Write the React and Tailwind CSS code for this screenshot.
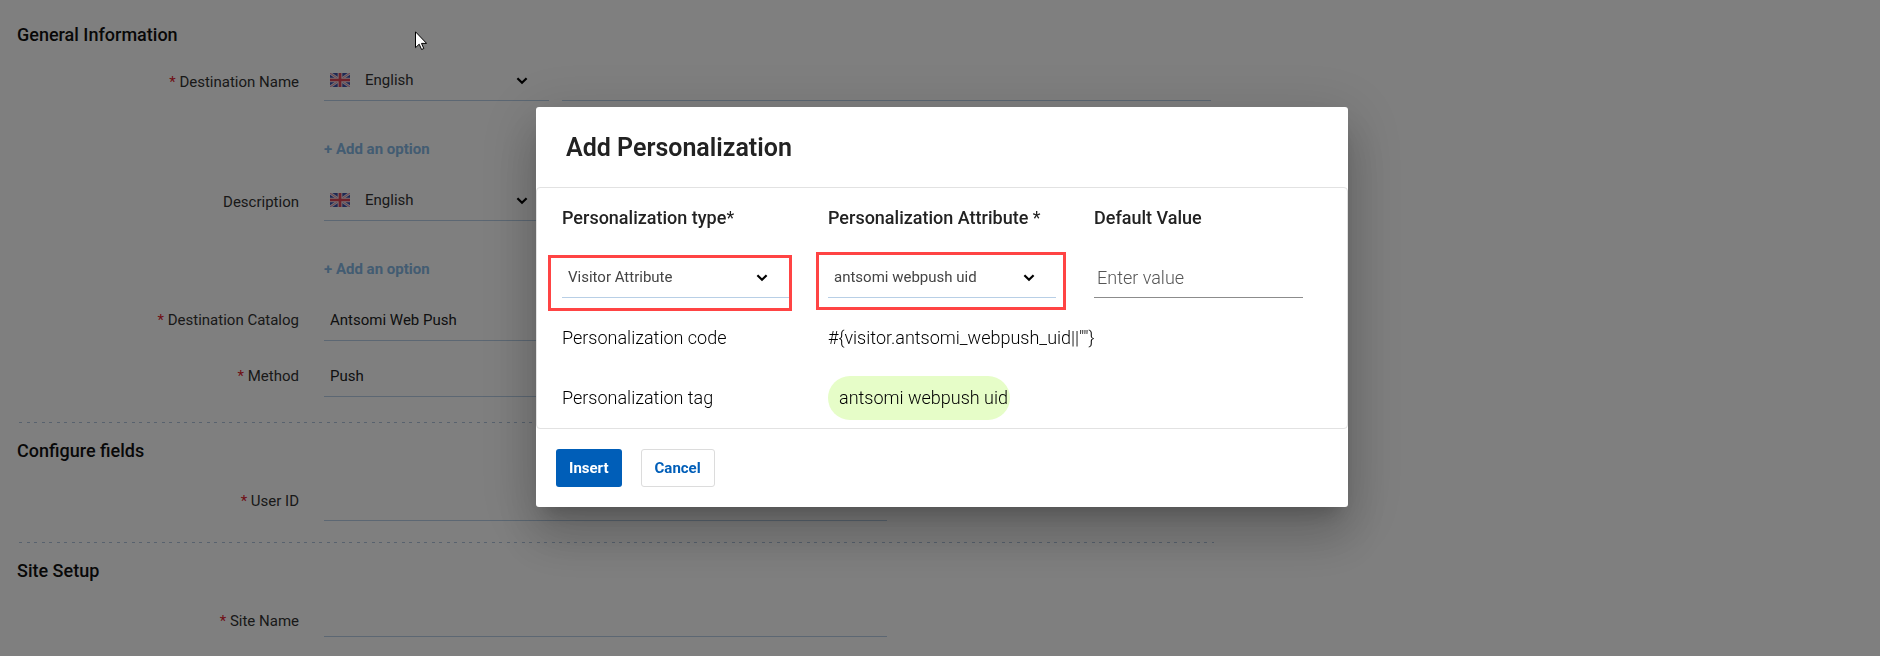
import React from "react";

function Chevron() {
  return (
    <svg
      viewBox="0 0 12 8"
      className="pointer-events-none absolute right-[21px] top-4 h-2 w-3"
      fill="none"
      stroke="#000"
      strokeWidth="2.2"
      aria-hidden="true"
    >
      <path d="M1.4 1.2 6 5.8l4.6-4.6" />
    </svg>
  );
}

function Flag() {
  return (
    <svg
      viewBox="0 0 60 42"
      preserveAspectRatio="none"
      className="pointer-events-none absolute left-[6px] top-3 h-[14px] w-5"
      aria-hidden="true"
    >
      <rect width="60" height="42" fill="#3f51a8" />
      <path d="M0 0l60 42M60 0L0 42" stroke="#e6e0ee" strokeWidth="8" />
      <path d="M0 0l60 42M60 0L0 42" stroke="#e0566a" strokeWidth="2" />
      <path d="M30 0v42M0 21h60" stroke="#f0dfe6" strokeWidth="14" />
      <path d="M30 0v42M0 21h60" stroke="#dd4456" strokeWidth="8" />
    </svg>
  );
}

function Row({ id, label, required, labelClass = "leading-10", children }) {
  return (
    <div className="flex items-start">
      <label
        htmlFor={id}
        className={`h-10 w-[282px] shrink-0 text-right text-[15px] text-[#333] ${labelClass}`}
      >
        {required && <span className="text-[#e0202c]">* </span>}
        {label}
      </label>
      <div className="ml-[25px] flex min-w-0 flex-1 gap-[13px]">{children}</div>
    </div>
  );
}

const fieldLine = "h-10 w-full border-b border-[#b8cfe6] bg-transparent outline-none";

function LanguageSelect({ id }) {
  return (
    <div className="relative w-[225px] shrink-0">
      <Flag />
      <select
        id={id}
        className="h-10 w-full appearance-none border-b border-[#b8cfe6] bg-transparent pl-[41px] text-[15px] text-[#333] outline-none"
      >
        <option>English</option>
      </select>
      <Chevron />
    </div>
  );
}

function AddOption() {
  return (
    <button
      type="button"
      className="mb-5 ml-[307px] mt-9 block h-6 text-[15px] font-bold leading-6 text-[#86b8e4]"
    >
      + Add an option
    </button>
  );
}

function Divider() {
  return (
    <div className="-mr-[3px] ml-[2px] h-px bg-[repeating-linear-gradient(90deg,#b0c4dc_0px,#b0c4dc_3px,transparent_3px,transparent_8px,#b0c4dc_8px,#b0c4dc_11px,transparent_11px,transparent_15px)]" />
  );
}

function Heading({ children }) {
  return <h2 className="h-6 text-lg font-medium leading-6 text-[#111]">{children}</h2>;
}

function ModalSelect({ id, label, value }) {
  return (
    <div className="relative">
      <select
        id={id}
        aria-label={label}
        className="h-10 w-full appearance-none border-b border-[#b8cfe6] bg-transparent pl-[6px] pt-px text-[15px] text-[#444] outline-none"
      >
        <option>{value}</option>
      </select>
      <Chevron />
    </div>
  );
}

function Dialog() {
  return (
    <div
      role="dialog"
      aria-labelledby="dialog-title"
      className="w-[812px] max-w-full rounded-[3px] bg-white shadow-[0_14px_19px_-9px_rgba(0,0,0,0.2),0_30px_48px_4px_rgba(0,0,0,0.14),0_11px_58px_10px_rgba(0,0,0,0.12)]"
    >
      <h1
        id="dialog-title"
        className="h-20 pl-[30px] text-[25px] font-semibold leading-[82px] text-[#222]"
      >
        Add Personalization
      </h1>
      <div className="rounded border border-[#e2e2e2] pb-2 pl-3 text-lg font-light text-black">
        <div className="grid grid-cols-3">
          <label htmlFor="ptype" className="pl-[13px] pt-[18px] font-medium leading-6 text-[#222]">
            Personalization type<span className="font-normal">*</span>
          </label>
          <label htmlFor="pattr" className="pl-[13px] pt-[18px] font-medium leading-6 text-[#222]">
            Personalization Attribute <span className="font-normal">*</span>
          </label>
          <label htmlFor="pdef" className="pl-[13px] pt-[18px] font-medium leading-6 text-[#222]">
            Default Value
          </label>
        </div>
        <div className="mt-7 grid grid-cols-3 font-normal">
          <div className="relative pl-[13px] pr-[26px]">
            <ModalSelect id="ptype" label="Personalization type" value="Visitor Attribute" />
            <div className="pointer-events-none absolute -bottom-[13px] -left-px right-[23px] -top-[3px] border-[3px] border-[#ff4444]" />
          </div>
          <div className="relative pl-[13px] pr-[25px]">
            <ModalSelect id="pattr" label="Personalization Attribute" value="antsomi webpush uid" />
            <div className="pointer-events-none absolute -bottom-[12px] -top-[6px] left-px right-[15px] border-[3px] border-[#ff4444]" />
          </div>
          <div className="pl-[13px] pr-11">
            <input
              id="pdef"
              placeholder="Enter value"
              className="h-10 w-full border-b border-[#8c8c8c] pl-[3px] font-light outline-none placeholder:text-[#555]"
            />
          </div>
        </div>
        <div className="mt-7 grid grid-cols-3 leading-6">
          <div className="pl-[13px]">Personalization code</div>
          <div className="col-span-2 pl-[13px]">{'#{visitor.antsomi_webpush_uid||""}'}</div>
        </div>
        <div className="mt-[26px] grid grid-cols-3 leading-[44px]">
          <div className="pl-[13px]">Personalization tag</div>
          <div className="col-span-2 pl-[13px]">
            <span className="inline-block h-11 rounded-full bg-[#e6fdc8] pl-[11px] pr-[2px] align-top">
              antsomi webpush uid
            </span>
          </div>
        </div>
      </div>
      <div className="flex gap-[19px] py-5 pl-5 text-[15px] font-bold">
        <button type="button" className="h-[38px] rounded-[3px] bg-[#005eb8] px-[13px] text-white">
          Insert
        </button>
        <button
          type="button"
          className="h-[38px] rounded-[3px] border border-[#dcdcdc] px-[13px] text-[#005eb8]"
        >
          Cancel
        </button>
      </div>
    </div>
  );
}

export default function App() {
  return (
    <div className="min-h-screen bg-white font-[Roboto,sans-serif]">
      <main className="max-w-[1211px] pb-4 pl-[17px] pt-[23px]">
        <Heading>General Information</Heading>
        <div className="mt-[14px]">
          <Row id="dest-lang" label="Destination Name" required labelClass="leading-[42px]">
            <LanguageSelect id="dest-lang" />
            <input aria-label="Destination Name" className={fieldLine} />
          </Row>
          <AddOption />
          <Row id="desc-lang" label="Description" labelClass="leading-[42px]">
            <LanguageSelect id="desc-lang" />
            <input aria-label="Description" className={fieldLine} />
          </Row>
          <AddOption />
          <Row id="catalog" label="Destination Catalog" required labelClass="leading-[38px]">
            <input
              id="catalog"
              defaultValue="Antsomi Web Push"
              className="h-10 w-[563px] border-b border-[#b8cfe6] pb-px pl-[6px] text-[15px] text-[#222] outline-none"
            />
          </Row>
        </div>
        <div className="mb-[25px] mt-4">
          <Row id="method" label="Method" required labelClass="leading-[38px]">
            <input
              id="method"
              defaultValue="Push"
              className="h-10 w-[563px] border-b border-[#b8cfe6] pb-px pl-[6px] text-[15px] text-[#222] outline-none"
            />
          </Row>
        </div>
        <Divider />
        <div className="mb-[21px] mt-4">
          <Heading>Configure fields</Heading>
          <div className="mt-[18px]">
            <Row id="user-id" label="User ID" required>
              <input id="user-id" className="h-10 w-[563px] border-b border-[#b8cfe6] outline-none" />
            </Row>
          </div>
        </div>
        <Divider />
        <div className="mt-4">
          <Heading>Site Setup</Heading>
          <div className="mt-[18px]">
            <Row id="site-name" label="Site Name" required>
              <input id="site-name" className="h-9 w-[563px] border-b border-[#b8cfe6] outline-none" />
            </Row>
          </div>
        </div>
      </main>
      <div className="fixed inset-0 flex items-start justify-center bg-black/50 pl-1 pt-[107px]">
        <Dialog />
      </div>
      <svg
        viewBox="0 0 12 19"
        className="pointer-events-none fixed left-[415px] top-[31px] h-[19px] w-3"
        aria-hidden="true"
      >
        <path
          d="M.5.8v15.9l3.7-3.5 2.4 5.3 2.2-1-2.3-5.1h5.1z"
          fill="#fff"
          stroke="#000"
          strokeWidth="1"
          strokeLinejoin="round"
        />
      </svg>
    </div>
  );
}
